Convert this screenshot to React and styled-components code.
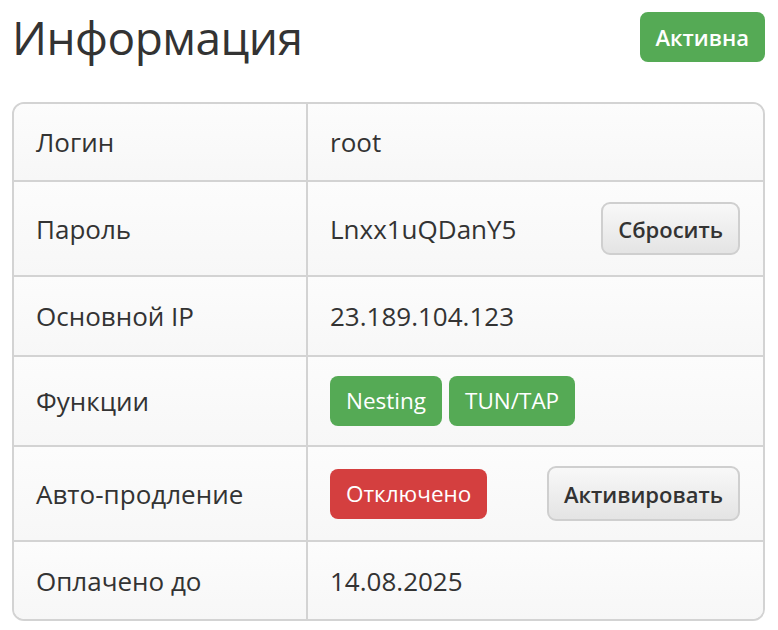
import React from "react";
import styled, { createGlobalStyle, css } from "styled-components";

const Global = createGlobalStyle`
  html, body { margin: 0; padding: 0; background: #fff; }
  body { font-family: "Open Sans", "Noto Sans", sans-serif; color: #333; }
`;

const Page = styled.div`
  padding: 12px 13px 0 12px;
`;

const Header = styled.div`
  display: flex;
  justify-content: space-between;
  align-items: center;
  height: 50px;
  margin-bottom: 40px;
`;

const Title = styled.h1`
  margin: 0;
  font-size: 46px;
  font-weight: 400;
  line-height: 50px;
  color: #333;
  letter-spacing: -0.5px;
`;

const tones = {
  success: "#55aa55",
  danger: "#d43f3f",
};

const Badge = styled.span`
  display: inline-flex;
  align-items: center;
  height: 50px;
  padding: 0 ${(p) => (p.$big ? 16 : 16)}px;
  border-radius: 8px;
  background: ${(p) => tones[p.$tone]};
  color: #fff;
  font-size: ${(p) => (p.$big ? 22 : 22.5)}px;
  font-weight: ${(p) => (p.$big ? 600 : 400)};
  box-sizing: border-box;
  white-space: nowrap;
`;

const Card = styled.div`
  border: 2px solid #d3d3d3;
  border-radius: 12px;
  overflow: hidden;
`;

const Row = styled.div`
  display: grid;
  grid-template-columns: 292px 1fr;
  background: linear-gradient(#fcfcfc, #f7f7f7);
  ${(p) =>
    !p.$first &&
    css`
      border-top: 2px solid #d3d3d3;
    `}
`;

const Cell = styled.div`
  display: flex;
  align-items: center;
  gap: 7px;
  padding: 0 23px 0 22px;
  min-height: ${(p) => p.$h}px;
  font-size: 26px;
  line-height: 32px;
  color: #333;
  ${(p) =>
    p.$value &&
    css`
      border-left: 2px solid #d3d3d3;
      padding-left: 22px;
    `}
`;

const Spacer = styled.div`
  flex: 1;
`;

const Button = styled.button`
  font-family: inherit;
  height: ${(p) => p.$h}px;
  padding: 0 15px;
  border: 2px solid #cfcfcf;
  border-radius: 9px;
  background: linear-gradient(#f8f8f8, #e4e4e4);
  color: #333;
  font-size: 22px;
  font-weight: 600;
  cursor: pointer;
  box-sizing: border-box;
`;

const rows = [
  { label: "Логин", h: 76, value: "root" },
  {
    label: "Пароль",
    h: 93,
    value: (
      <>
        Lnxx1uQDanY5
        <Spacer />
        <Button $h={53}>Сбросить</Button>
      </>
    ),
  },
  { label: "Основной IP", h: 78, value: "23.189.104.123" },
  {
    label: "Функции",
    h: 88,
    value: (
      <>
        <Badge $tone="success">Nesting</Badge>
        <Badge $tone="success">TUN/TAP</Badge>
      </>
    ),
  },
  {
    label: "Авто-продление",
    h: 93,
    value: (
      <>
        <Badge $tone="danger">Отключено</Badge>
        <Spacer />
        <Button $h={55}>Активировать</Button>
      </>
    ),
  },
  { label: "Оплачено до", h: 77, value: "14.08.2025" },
];

export default function App() {
  return (
    <>
      <Global />
      <Page>
        <Header>
          <Title>Информация</Title>
          <Badge $tone="success" $big>
            Активна
          </Badge>
        </Header>
        <Card>
          {rows.map((r, i) => (
            <Row key={r.label} $first={i === 0}>
              <Cell $h={r.h}>{r.label}</Cell>
              <Cell $h={r.h} $value>
                {r.value}
              </Cell>
            </Row>
          ))}
        </Card>
      </Page>
    </>
  );
}
